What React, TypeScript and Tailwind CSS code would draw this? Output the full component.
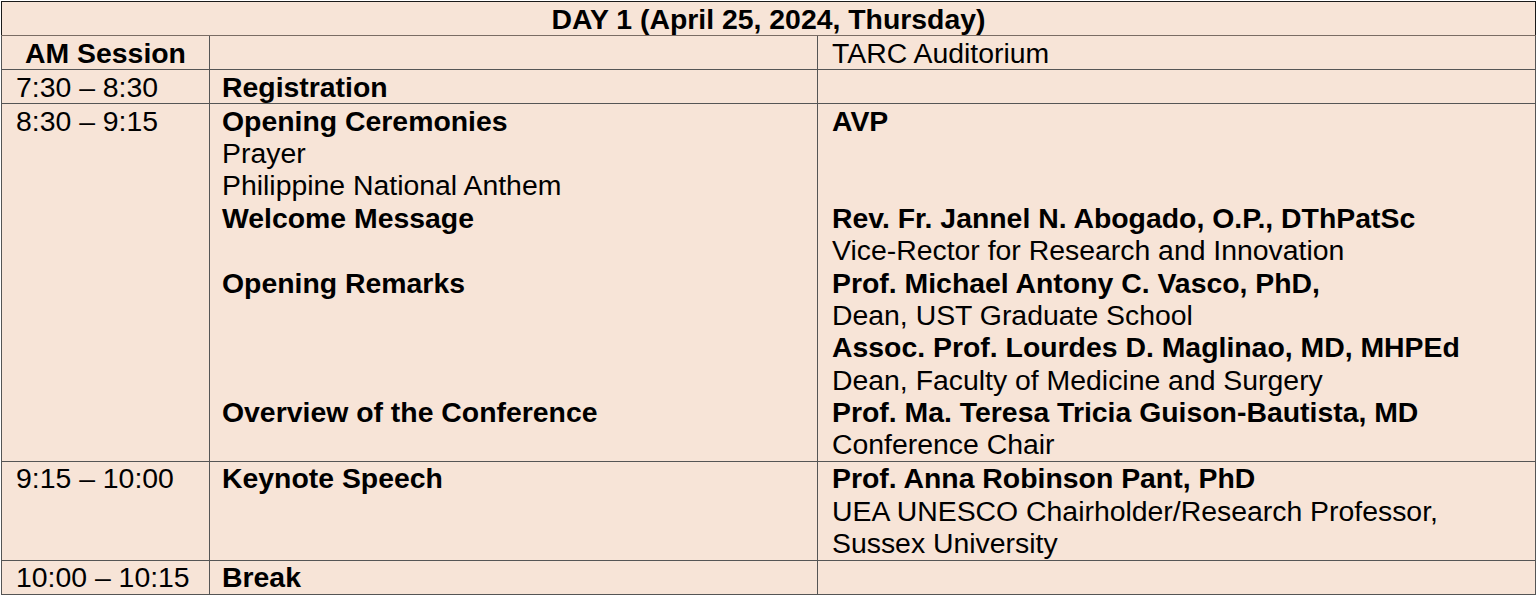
type Line = { t: string; b?: boolean };

const Cell = ({ lines, className = "" }: { lines: Line[]; className?: string }) => (
  <td className={`border border-[#555] align-top p-0 pt-[0.6px] ${className}`}>
    {lines.map((l, i) => (
      <div key={i} className={`h-[32.4px] whitespace-nowrap ${l.b ? "font-bold" : ""}`}>
        {l.t}
      </div>
    ))}
  </td>
);

export default function App() {
  const rows: { time: Line[]; what: Line[]; who: Line[] }[] = [
    {
      time: [{ t: "7:30 – 8:30" }],
      what: [{ t: "Registration", b: true }],
      who: [{ t: "" }],
    },
    {
      time: [{ t: "8:30 – 9:15" }],
      what: [
        { t: "Opening Ceremonies", b: true },
        { t: "Prayer" },
        { t: "Philippine National Anthem" },
        { t: "Welcome Message", b: true },
        { t: "" },
        { t: "Opening Remarks", b: true },
        { t: "" },
        { t: "" },
        { t: "" },
        { t: "Overview of the Conference", b: true },
        { t: "" },
      ],
      who: [
        { t: "AVP", b: true },
        { t: "" },
        { t: "" },
        { t: "Rev. Fr. Jannel N. Abogado, O.P., DThPatSc", b: true },
        { t: "Vice-Rector for Research and Innovation" },
        { t: "Prof. Michael Antony C. Vasco, PhD,", b: true },
        { t: "Dean, UST Graduate School" },
        { t: "Assoc. Prof. Lourdes D. Maglinao, MD, MHPEd", b: true },
        { t: "Dean, Faculty of Medicine and Surgery" },
        { t: "Prof. Ma. Teresa Tricia Guison-Bautista, MD", b: true },
        { t: "Conference Chair" },
      ],
    },
    {
      time: [{ t: "9:15 – 10:00" }],
      what: [{ t: "Keynote Speech", b: true }],
      who: [
        { t: "Prof. Anna Robinson Pant, PhD", b: true },
        { t: "UEA UNESCO Chairholder/Research Professor," },
        { t: "Sussex University" },
      ],
    },
    {
      time: [{ t: "10:00 – 10:15" }],
      what: [{ t: "Break", b: true }],
      who: [{ t: "" }],
    },
  ];

  return (
    <div className="min-h-[595px] bg-white pt-px pl-px font-['Liberation_Sans',Arial,sans-serif] text-[28.4px] leading-[32.4px] text-black">
      <table className="w-[1534px] table-fixed border-collapse border border-[#1a1a1a] bg-[#f7e4d7]">
        <colgroup>
          <col className="w-[208px]" />
          <col className="w-[608px]" />
          <col className="w-[718px]" />
        </colgroup>
        <tbody>
          <tr>
            <td colSpan={3} className="border border-[#1a1a1a] border-b-[#7a6c64] p-0 pt-[0.6px] text-center font-bold">
              <div className="h-[32.4px]">DAY 1 (April 25, 2024, Thursday)</div>
            </td>
          </tr>
          <tr>
            <Cell lines={[{ t: "AM Session", b: true }]} className="text-center" />
            <Cell lines={[{ t: "" }]} className="pl-[12px]" />
            <Cell lines={[{ t: "TARC Auditorium" }]} className="pl-[14px]" />
          </tr>
          {rows.map((r, i) => (
            <tr key={i}>
              <Cell lines={r.time} className="pl-[14px] border-[#1a1a1a]" />
              <Cell lines={r.what} className="pl-[12px] border-[#1a1a1a]" />
              <Cell lines={r.who} className="pl-[14px] border-[#1a1a1a]" />
            </tr>
          ))}
        </tbody>
      </table>
    </div>
  );
}
